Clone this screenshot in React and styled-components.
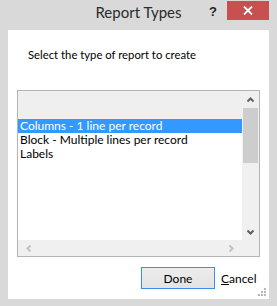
import React from "react"
import styled, { createGlobalStyle } from "styled-components"

const GlobalStyle = createGlobalStyle`
  html, body {
    margin: 0;
    padding: 0;
    background: #d9d9d9;
  }
  body {
    font-family: Lato, "Noto Sans", sans-serif;
  }
`

const Window = styled.div`
  width: 277px;
  height: 306px;
  background: #d9d9d9;
  display: flex;
  flex-direction: column;
  box-sizing: border-box;
`

const TitleBar = styled.div`
  height: 30px;
  display: grid;
  grid-template-columns: 1fr auto auto;
  align-items: start;
  padding-right: 8px;
  position: relative;
`

const Title = styled.div`
  position: absolute;
  left: 0;
  right: 0;
  top: 3px;
  text-align: center;
  font-size: 15px;
  color: #2b2b2b;
`

const HelpButton = styled.div`
  grid-column: 2;
  width: 28px;
  height: 20px;
  margin-top: 1px;
  display: flex;
  align-items: center;
  justify-content: center;
  font-family: "Liberation Sans", sans-serif;
  font-weight: bold;
  font-size: 13px;
  color: #222;
`

const CloseButton = styled.div`
  grid-column: 3;
  width: 42px;
  height: 19px;
  margin-top: 1px;
  background: #c75050;
  display: flex;
  align-items: center;
  justify-content: center;
`

const Client = styled.div`
  flex: 1;
  margin: 0 8px 7px;
  background: #fff;
  display: flex;
  flex-direction: column;
  position: relative;
`

const Prompt = styled.div`
  font-size: 11.3px;
  line-height: 14px;
  color: #000;
  padding: 18px 0 0 20px;
  height: 60px;
  box-sizing: border-box;
`

const ListBox = styled.div`
  margin-left: 9px;
  width: 243px;
  height: 167px;
  box-sizing: border-box;
  border: 1px solid #b4b4b4;
  display: grid;
  grid-template-columns: 1fr 17px;
  grid-template-rows: 1fr 16px;
`

const ListArea = styled.div`
  background: #fff;
  display: flex;
  flex-direction: column;
`

const EmptyBand = styled.div`
  height: 28px;
  background: #efefef;
`

const Item = styled.div`
  height: 14px;
  line-height: 14px;
  font-size: 12px;
  padding-left: 2px;
  white-space: nowrap;
  overflow: hidden;
  color: ${p => (p.$selected ? "#fff" : "#000")};
  background: ${p => (p.$selected ? "#3399ff" : "transparent")};
`

const VScroll = styled.div`
  background: #f0f0f0;
  display: flex;
  flex-direction: column;
`

const ArrowBox = styled.div`
  height: 17px;
  display: flex;
  align-items: center;
  justify-content: center;
  flex: none;
`

const Thumb = styled.div`
  height: 55px;
  width: 15px;
  margin-left: 1px;
  background: #cdcdcd;
`

const Spacer = styled.div`
  flex: 1;
`

const HScroll = styled.div`
  background: #f0f0f0;
  display: flex;
  align-items: center;
  justify-content: space-between;
  padding: 0 8px;
`

const Corner = styled.div`
  background: #f0f0f0;
`

const ButtonRow = styled.div`
  display: flex;
  align-items: center;
  margin-top: 10px;
  padding-left: 133px;
  gap: 6px;
`

const DoneButton = styled.button`
  width: 74px;
  height: 22px;
  box-sizing: border-box;
  border: 1px solid #3c8fe6;
  background: linear-gradient(#ececec, #e3e3e3);
  font-family: Lato, "Noto Sans", sans-serif;
  font-size: 12px;
  color: #000;
  padding: 0;
`

const LinkButton = styled.div`
  font-size: 12px;
  color: #000;
  u {
    text-decoration: underline;
  }
`

const Grip = styled.svg`
  position: absolute;
  right: 2px;
  bottom: 2px;
`

const Chevron = ({ dir, color }) => {
  const paths = {
    up: "M0.5 4.5 L3.5 1.5 L6.5 4.5",
    down: "M0.5 1.5 L3.5 4.5 L6.5 1.5",
    left: "M4.5 0.5 L1.5 3.5 L4.5 6.5",
    right: "M1.5 0.5 L4.5 3.5 L1.5 6.5",
  }
  const vertical = dir === "up" || dir === "down"
  return (
    <svg width={vertical ? 7 : 6} height={vertical ? 6 : 7} viewBox={vertical ? "0 0 7 6" : "0 0 6 7"}>
      <path d={paths[dir]} fill="none" stroke={color} strokeWidth="2" />
    </svg>
  )
}

const items = [
  "Columns - 1 line per record",
  "Block - Multiple lines per record",
  "Labels",
]

export default function App() {
  return (
    <Window>
      <GlobalStyle />
      <TitleBar>
        <Title>Report Types</Title>
        <HelpButton>?</HelpButton>
        <CloseButton>
          <svg width="10" height="9" viewBox="0 0 10 9">
            <path d="M1 0.5 L9 8.5 M9 0.5 L1 8.5" stroke="#fff" strokeWidth="1.8" />
          </svg>
        </CloseButton>
      </TitleBar>
      <Client>
        <Prompt>Select the type of report to create</Prompt>
        <ListBox>
          <ListArea>
            <EmptyBand />
            {items.map((t, i) => (
              <Item key={t} $selected={i === 0}>
                {t}
              </Item>
            ))}
          </ListArea>
          <VScroll>
            <ArrowBox>
              <Chevron dir="up" color="#606060" />
            </ArrowBox>
            <Thumb />
            <Spacer />
            <ArrowBox>
              <Chevron dir="down" color="#606060" />
            </ArrowBox>
          </VScroll>
          <HScroll>
            <Chevron dir="left" color="#c2c2c2" />
            <Chevron dir="right" color="#c2c2c2" />
          </HScroll>
          <Corner />
        </ListBox>
        <ButtonRow>
          <DoneButton>Done</DoneButton>
          <LinkButton>
            <u>C</u>ancel
          </LinkButton>
        </ButtonRow>
        <Grip width="9" height="9" viewBox="0 0 9 9">
          <g fill="#b8b8b8">
            <rect x="6" y="0" width="2" height="2" />
            <rect x="3" y="3" width="2" height="2" />
            <rect x="6" y="3" width="2" height="2" />
            <rect x="0" y="6" width="2" height="2" />
            <rect x="3" y="6" width="2" height="2" />
            <rect x="6" y="6" width="2" height="2" />
          </g>
        </Grip>
      </Client>
    </Window>
  )
}
